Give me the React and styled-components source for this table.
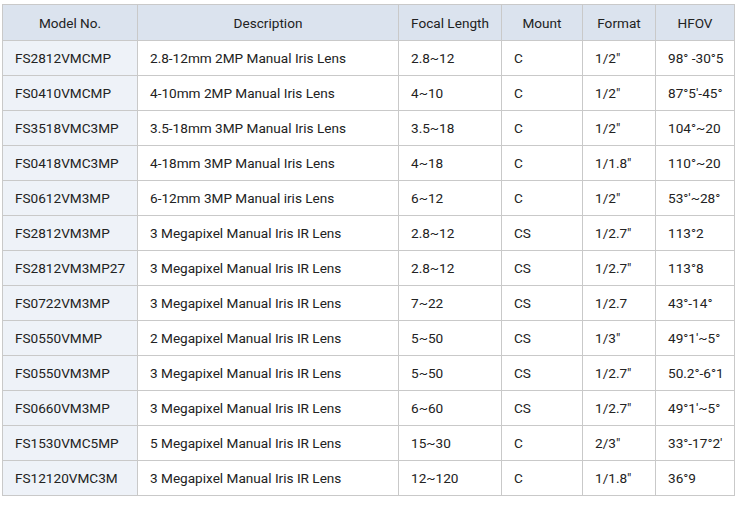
import React from 'react';
import styled, { createGlobalStyle } from 'styled-components';

const GlobalStyle = createGlobalStyle`
  html, body {
    margin: 0;
    padding: 0;
    background: #fff;
  }
  body {
    font-family: Roboto, "Liberation Sans", Arial, sans-serif;
    color: #222;
  }
`;

const Wrapper = styled.div`
  padding: 4px 2px;
`;

const Table = styled.table`
  width: 732px;
  border-collapse: collapse;
  table-layout: fixed;
  font-size: 13.6px;
`;

const HeadCell = styled.th`
  height: 36px;
  padding: 0 8px;
  background: #dbe3ee;
  border: 1px solid #c9c9c9;
  font-weight: 400;
  text-align: center;
  white-space: nowrap;
  color: #222;
  box-sizing: border-box;
`;

const Cell = styled.td`
  height: 35px;
  padding: 0 12px;
  border: 1px solid #c9c9c9;
  background: ${p => (p.$model ? '#eef2f8' : '#fff')};
  text-align: left;
  white-space: nowrap;
  box-sizing: border-box;
`;

const columns = [
  { title: 'Model No.', width: 135 },
  { title: 'Description', width: 261 },
  { title: 'Focal Length', width: 103 },
  { title: 'Mount', width: 81 },
  { title: 'Format', width: 73 },
  { title: 'HFOV', width: 79 },
];

const lenses = [
  ['FS2812VMCMP', '2.8-12mm 2MP Manual Iris Lens', '2.8~12', 'C', '1/2"', '98° -30°5'],
  ['FS0410VMCMP', '4-10mm 2MP Manual Iris Lens', '4~10', 'C', '1/2"', '87°5′-45°'],
  ['FS3518VMC3MP', '3.5-18mm 3MP Manual Iris Lens', '3.5~18', 'C', '1/2"', '104°~20'],
  ['FS0418VMC3MP', '4-18mm 3MP Manual Iris Lens', '4~18', 'C', '1/1.8"', '110°~20'],
  ['FS0612VM3MP', '6-12mm 3MP Manual iris Lens', '6~12', 'C', '1/2"', '53°′~28°'],
  ['FS2812VM3MP', '3 Megapixel Manual Iris IR Lens', '2.8~12', 'CS', '1/2.7"', '113°2'],
  ['FS2812VM3MP27', '3 Megapixel Manual Iris IR Lens', '2.8~12', 'CS', '1/2.7"', '113°8'],
  ['FS0722VM3MP', '3 Megapixel Manual Iris IR Lens', '7~22', 'CS', '1/2.7', '43°-14°'],
  ['FS0550VMMP', '2 Megapixel Manual Iris IR Lens', '5~50', 'CS', '1/3"', '49°1\'~5°'],
  ['FS0550VM3MP', '3 Megapixel Manual Iris IR Lens', '5~50', 'CS', '1/2.7"', '50.2°-6°1'],
  ['FS0660VM3MP', '3 Megapixel Manual Iris IR Lens', '6~60', 'CS', '1/2.7"', '49°1\'~5°'],
  ['FS1530VMC5MP', '5 Megapixel Manual Iris IR Lens', '15~30', 'C', '2/3"', '33°-17°2′'],
  ['FS12120VMC3M', '3 Megapixel Manual Iris IR Lens', '12~120', 'C', '1/1.8"', '36°9'],
];

export default function App() {
  return (
    <>
      <GlobalStyle />
      <Wrapper>
        <Table>
          <colgroup>
            {columns.map(c => (
              <col key={c.title} style={{ width: c.width }} />
            ))}
          </colgroup>
          <thead>
            <tr>
              {columns.map(c => (
                <HeadCell key={c.title}>{c.title}</HeadCell>
              ))}
            </tr>
          </thead>
          <tbody>
            {lenses.map(row => (
              <tr key={row[0]}>
                {row.map((value, i) => (
                  <Cell key={i} $model={i === 0}>{value}</Cell>
                ))}
              </tr>
            ))}
          </tbody>
        </Table>
      </Wrapper>
    </>
  );
}
